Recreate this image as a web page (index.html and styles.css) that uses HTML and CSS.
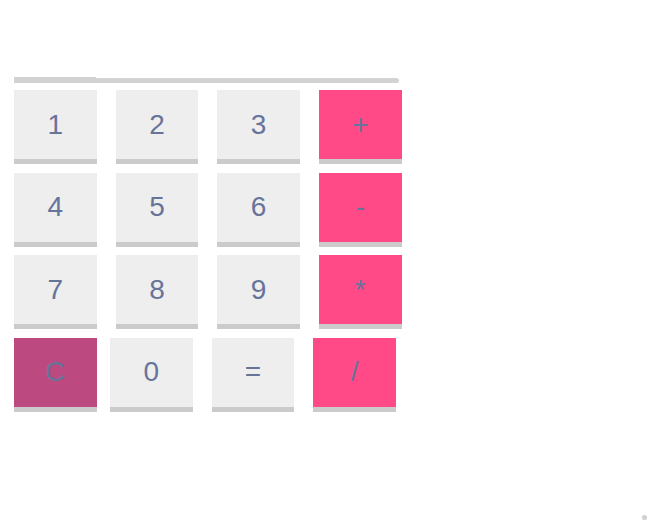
FILE: index.html
```html
<!DOCTYPE html>
<html>
<head>
<meta charset="utf-8">
<link rel="stylesheet" href="styles.css">
</head>
<body>
<div class="calc">
  <div class="display"><span class="display-left"></span><span class="display-right"></span></div>
  <div class="row">
    <div class="key">1</div><div class="key">2</div><div class="key">3</div><div class="key op">+</div>
  </div>
  <div class="row">
    <div class="key">4</div><div class="key">5</div><div class="key">6</div><div class="key op">-</div>
  </div>
  <div class="row">
    <div class="key">7</div><div class="key">8</div><div class="key">9</div><div class="key op">*</div>
  </div>
  <div class="row row-last">
    <div class="key clear">C</div><div class="key">0</div><div class="key">=</div><div class="key op">/</div>
  </div>
</div>
<div class="corner-dot"></div>
</body>
</html>
```
FILE: styles.css
```css
html, body {
  margin: 0;
  padding: 0;
  background: #ffffff;
  font-family: "Liberation Sans", Arial, sans-serif;
}
body {
  width: 648px;
  height: 521px;
  position: relative;
  overflow: hidden;
}
.calc {
  padding: 77px 0 0 14px;
}
.display {
  display: flex;
  align-items: flex-end;
  width: 385px;
  height: 6px;
  margin-bottom: 7px;
}
.display-left {
  width: 82px;
  height: 6px;
  background: #d3d3d3;
}
.display-right {
  flex: 1;
  height: 5px;
  background: #d3d3d3;
  border-radius: 0 3px 3px 0;
}
.row {
  display: flex;
  gap: 19.2px;
  margin-bottom: 8.5px;
}
.row-last .clear {
  margin-right: -5.7px;
}
.key {
  width: 82.5px;
  height: 69px;
  box-sizing: content-box;
  border-bottom: 5px solid #cbcbcb;
  background: #eeeeee;
  color: #67749a;
  font-size: 28px;
  line-height: 30px;
  display: flex;
  align-items: center;
  justify-content: center;
}
.op {
  background: #ff4a87;
}
.clear {
  background: #bc4a80;
}
.corner-dot {
  position: absolute;
  left: 642px;
  top: 515px;
  width: 5px;
  height: 5px;
  border-radius: 50%;
  background: #d0d0d0;
}
```
